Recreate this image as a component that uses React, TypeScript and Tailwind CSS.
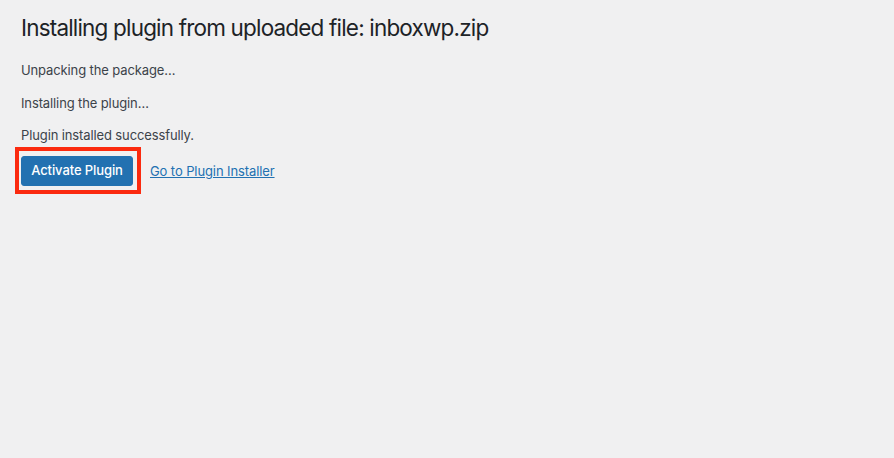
export default function App() {
  return (
    <div className="min-h-screen bg-[#f0f0f1] pl-[21px] pt-[13px] font-['Inter','Liberation_Sans',sans-serif] text-[#3c434a]">
      <h1 className="text-[22.5px] leading-[30px] font-normal tracking-[-0.82px] text-[#1d2327]">
        Installing plugin from uploaded file: inboxwp.zip
      </h1>
      <p className="mt-[18px] text-[13px] leading-[19.5px] tracking-[-0.12px]">Unpacking the package…</p>
      <p className="mt-[13px] text-[13px] leading-[19.5px] tracking-[-0.12px]">Installing the plugin…</p>
      <p className="mt-[13px] text-[13px] leading-[19.5px] tracking-[-0.12px]">Plugin installed successfully.</p>
      <div className="mt-[10px] flex items-center gap-[17px]">
        <div className="relative">
          <button
            type="button"
            className="flex h-[30px] w-[112px] items-center justify-center rounded-[3px] border border-[#2271b1] bg-[#2271b1] text-[13px] font-medium tracking-[-0.1px] text-white"
          >
            Activate Plugin
          </button>
          {/* annotation box */}
          <div className="pointer-events-none absolute -top-[9px] -bottom-[8px] -left-[6px] -right-[8px] border-[4px] border-[#fb2a0f]" />
        </div>
        <a href="#" className="pt-[2px] text-[13px] tracking-[-0.1px] text-[#2271b1] underline">
          Go to Plugin Installer
        </a>
      </div>
    </div>
  );
}
